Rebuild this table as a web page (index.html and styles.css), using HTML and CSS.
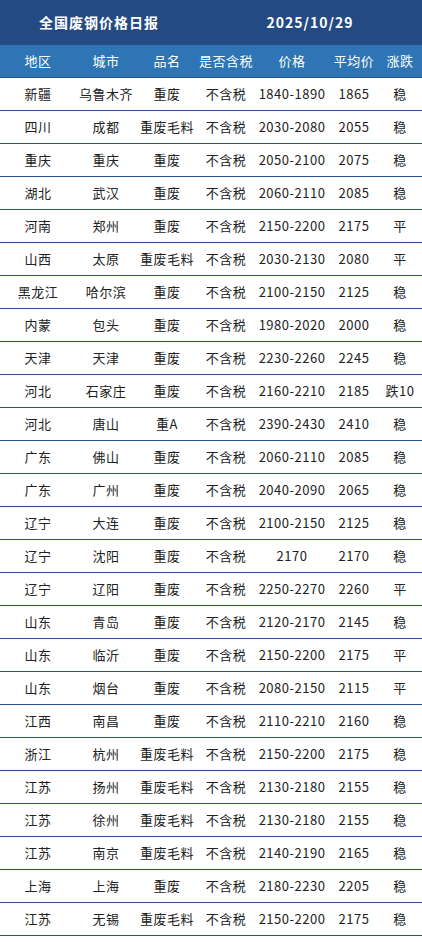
FILE: index.html
```html
<!DOCTYPE html>
<html lang="zh-CN">
<head>
<meta charset="utf-8">
<title>全国废钢价格日报</title>
<link rel="stylesheet" href="styles.css">
</head>
<body>
<div class="report">
  <div class="row title">
    <div class="title-name">全国废钢价格日报</div>
    <div class="title-date">2025/10/29</div>
  </div>
  <div class="row head">
    <div>地区</div><div>城市</div><div>品名</div><div>是否含税</div><div>价格</div><div>平均价</div><div>涨跌</div>
  </div>
  <div class="row"><div>新疆</div><div>乌鲁木齐</div><div>重废</div><div>不含税</div><div>1840-1890</div><div>1865</div><div>稳</div></div>
  <div class="row"><div>四川</div><div>成都</div><div>重废毛料</div><div>不含税</div><div>2030-2080</div><div>2055</div><div>稳</div></div>
  <div class="row"><div>重庆</div><div>重庆</div><div>重废</div><div>不含税</div><div>2050-2100</div><div>2075</div><div>稳</div></div>
  <div class="row"><div>湖北</div><div>武汉</div><div>重废</div><div>不含税</div><div>2060-2110</div><div>2085</div><div>稳</div></div>
  <div class="row"><div>河南</div><div>郑州</div><div>重废</div><div>不含税</div><div>2150-2200</div><div>2175</div><div>平</div></div>
  <div class="row"><div>山西</div><div>太原</div><div>重废毛料</div><div>不含税</div><div>2030-2130</div><div>2080</div><div>平</div></div>
  <div class="row"><div>黑龙江</div><div>哈尔滨</div><div>重废</div><div>不含税</div><div>2100-2150</div><div>2125</div><div>稳</div></div>
  <div class="row"><div>内蒙</div><div>包头</div><div>重废</div><div>不含税</div><div>1980-2020</div><div>2000</div><div>稳</div></div>
  <div class="row"><div>天津</div><div>天津</div><div>重废</div><div>不含税</div><div>2230-2260</div><div>2245</div><div>稳</div></div>
  <div class="row"><div>河北</div><div>石家庄</div><div>重废</div><div>不含税</div><div>2160-2210</div><div>2185</div><div>跌10</div></div>
  <div class="row"><div>河北</div><div>唐山</div><div>重A</div><div>不含税</div><div>2390-2430</div><div>2410</div><div>稳</div></div>
  <div class="row"><div>广东</div><div>佛山</div><div>重废</div><div>不含税</div><div>2060-2110</div><div>2085</div><div>稳</div></div>
  <div class="row"><div>广东</div><div>广州</div><div>重废</div><div>不含税</div><div>2040-2090</div><div>2065</div><div>稳</div></div>
  <div class="row"><div>辽宁</div><div>大连</div><div>重废</div><div>不含税</div><div>2100-2150</div><div>2125</div><div>稳</div></div>
  <div class="row"><div>辽宁</div><div>沈阳</div><div>重废</div><div>不含税</div><div>2170</div><div>2170</div><div>稳</div></div>
  <div class="row"><div>辽宁</div><div>辽阳</div><div>重废</div><div>不含税</div><div>2250-2270</div><div>2260</div><div>平</div></div>
  <div class="row"><div>山东</div><div>青岛</div><div>重废</div><div>不含税</div><div>2120-2170</div><div>2145</div><div>稳</div></div>
  <div class="row"><div>山东</div><div>临沂</div><div>重废</div><div>不含税</div><div>2150-2200</div><div>2175</div><div>平</div></div>
  <div class="row"><div>山东</div><div>烟台</div><div>重废</div><div>不含税</div><div>2080-2150</div><div>2115</div><div>平</div></div>
  <div class="row"><div>江西</div><div>南昌</div><div>重废</div><div>不含税</div><div>2110-2210</div><div>2160</div><div>稳</div></div>
  <div class="row"><div>浙江</div><div>杭州</div><div>重废毛料</div><div>不含税</div><div>2150-2200</div><div>2175</div><div>稳</div></div>
  <div class="row"><div>江苏</div><div>扬州</div><div>重废毛料</div><div>不含税</div><div>2130-2180</div><div>2155</div><div>稳</div></div>
  <div class="row"><div>江苏</div><div>徐州</div><div>重废毛料</div><div>不含税</div><div>2130-2180</div><div>2155</div><div>稳</div></div>
  <div class="row"><div>江苏</div><div>南京</div><div>重废毛料</div><div>不含税</div><div>2140-2190</div><div>2165</div><div>稳</div></div>
  <div class="row"><div>上海</div><div>上海</div><div>重废</div><div>不含税</div><div>2180-2230</div><div>2205</div><div>稳</div></div>
  <div class="row"><div>江苏</div><div>无锡</div><div>重废毛料</div><div>不含税</div><div>2150-2200</div><div>2175</div><div>稳</div></div>
</div>
</body>
</html>
```
FILE: styles.css
```css
html, body {
  margin: 0;
  padding: 0;
  background: #ffffff;
}
body {
  font-family: "Noto Sans CJK SC", "Noto Sans", sans-serif;
  font-size: 13px;
  color: #222222;
}
.report {
  width: 422px;
}
.row {
  display: grid;
  grid-template-columns: 76px 60px 62px 56px 76px 48px 44px;
  height: 32px;
  border-bottom: 1px solid #2a5090;
  align-items: center;
  justify-items: center;
  white-space: nowrap;
  letter-spacing: 0.5px;
}
.row > div {
  line-height: 32px;
  text-align: center;
}
.title {
  height: 45px;
  border-bottom: none;
  background: #244a84;
  color: #ffffff;
  font-weight: bold;
  font-size: 14px;
  letter-spacing: 1px;
}
.title > div {
  line-height: 45px;
}
.title-name {
  grid-column: 1 / span 3;
}
.title-date {
  grid-column: 4 / span 4;
}
.head {
  background: #2e75b6;
  color: #ffffff;
  height: 32px;
}
```
